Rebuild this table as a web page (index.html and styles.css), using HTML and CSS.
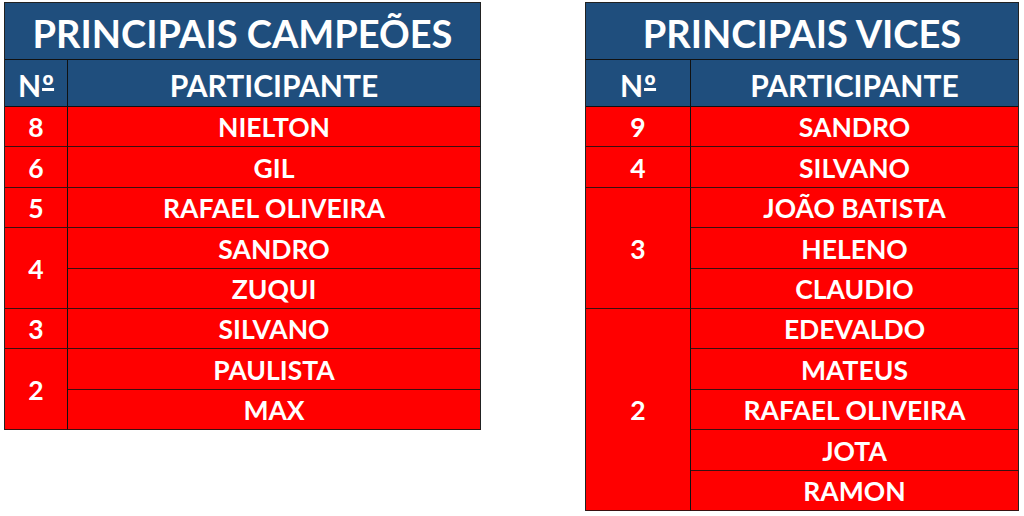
FILE: index.html
```html
<!DOCTYPE html>
<html lang="pt">
<head>
<meta charset="utf-8">
<link rel="stylesheet" href="styles.css">
</head>
<body>
<div class="page">
  <div class="board board-left">
    <div class="title">PRINCIPAIS CAMPEÕES</div>
    <div class="head num">N<span class="ord">º</span></div>
    <div class="head">PARTICIPANTE</div>
    <div class="num">8</div><div class="name">NIELTON</div>
    <div class="num">6</div><div class="name">GIL</div>
    <div class="num">5</div><div class="name">RAFAEL OLIVEIRA</div>
    <div class="num span2">4</div><div class="name">SANDRO</div><div class="name">ZUQUI</div>
    <div class="num">3</div><div class="name">SILVANO</div>
    <div class="num span2">2</div><div class="name">PAULISTA</div><div class="name">MAX</div>
  </div>
  <div class="board board-right">
    <div class="title">PRINCIPAIS VICES</div>
    <div class="head num">N<span class="ord">º</span></div>
    <div class="head">PARTICIPANTE</div>
    <div class="num">9</div><div class="name">SANDRO</div>
    <div class="num">4</div><div class="name">SILVANO</div>
    <div class="num span3">3</div><div class="name">JOÃO BATISTA</div><div class="name">HELENO</div><div class="name">CLAUDIO</div>
    <div class="num span5">2</div><div class="name">EDEVALDO</div><div class="name">MATEUS</div><div class="name">RAFAEL OLIVEIRA</div><div class="name">JOTA</div><div class="name">RAMON</div>
  </div>
</div>
</body>
</html>
```
FILE: styles.css
```css
html, body { margin: 0; padding: 0; background: #fff; }
body { font-family: "Lato", "Open Sans", sans-serif; font-weight: 700; color: #fff; }
.page {
  display: flex;
  align-items: flex-start;
  gap: 104px;
  padding: 2px 0 0 4px;
}
.board {
  display: grid;
  border-top: 1px solid #222;
  border-left: 1px solid #222;
}
.board-left {
  width: 476px;
  grid-template-columns: 63px 1fr;
  grid-template-rows: 57px 47px repeat(8, 40.4px);
}
.board-right {
  width: 433px;
  grid-template-columns: 105px 1fr;
  grid-template-rows: 57px 47px repeat(10, 40.4px);
}
.board > div {
  display: flex;
  align-items: center;
  justify-content: center;
  border-right: 1px solid #222;
  border-bottom: 1px solid #3a1010;
  background: #ff0000;
  font-size: 26.5px;
  line-height: 1;
  white-space: nowrap;
  padding-top: 2px;
}
.board > .title {
  grid-column: 1 / -1;
  background: #1f4e7d;
  font-size: 38px;
  border-bottom-color: #111;
  padding-top: 4px;
}
.board > .head {
  background: #1f4e7d;
  font-size: 30px;
  border-bottom-color: #111;
  padding-top: 3px;
}
.ord {
  font-size: 1em;
  margin-left: 1px;
  text-decoration: underline;
  text-decoration-thickness: 3px;
  text-underline-offset: -9px;
  text-decoration-skip-ink: none;
}
.board > .span2 { grid-row: span 2; }
.board > .span3 { grid-row: span 3; }
.board > .span5 { grid-row: span 5; }
.board > .num { border-right-color: #111; }
```
